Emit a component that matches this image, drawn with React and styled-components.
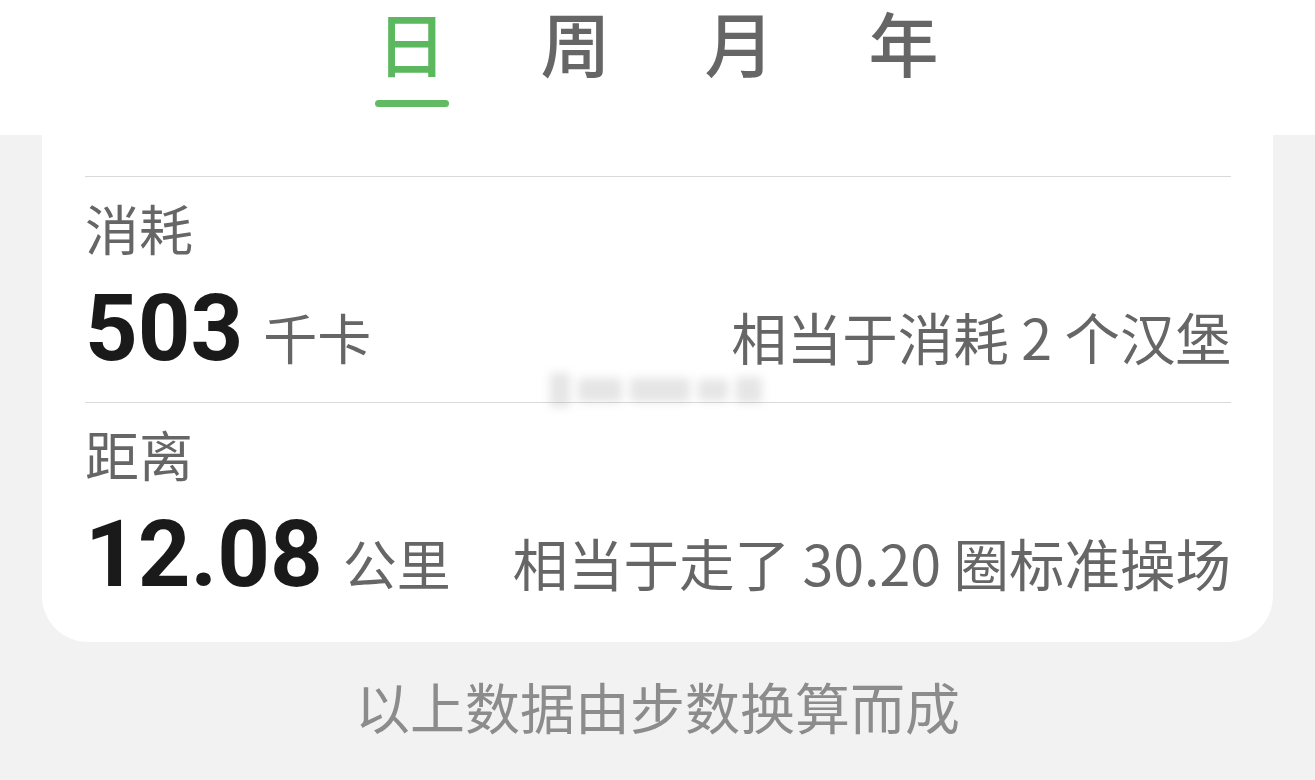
import React from 'react';
import styled, {createGlobalStyle} from "styled-components";

const GlobalStyle = createGlobalStyle`
  html, body {
    margin: 0;
    padding: 0;
    background: #f2f2f2;
  }
  body {
    font-family: "Noto Sans CJK SC", "Noto Sans", sans-serif;
  }
`;

const Page = styled.div`
  width: 1315px;
  height: 780px;
  overflow: hidden;
  background: #f2f2f2;
  display: flex;
  flex-direction: column;
`;

const Header = styled.div`
  height: 135px;
  background: #ffffff;
  display: flex;
  justify-content: center;
  gap: 90px;
`;

const Tab = styled.div`
  display: flex;
  flex-direction: column;
  align-items: center;
  padding-top: 2px;
`;

const TabText = styled.span`
  font-size: 70px;
  line-height: 80px;
  font-weight: 500;
  color: ${({active}) => active ? "#5cb85e" : "#666666"};
`;

const TabBar = styled.div`
  margin-top: 18px;
  width: 74px;
  height: 7px;
  border-radius: 4px;
  background: ${({active}) => active ? "#62bb62" : "transparent"};
`;

const Card = styled.div`
  position: relative;
  margin: 0 42px;
  padding: 41px 42px 14px 43px;
  background: #ffffff;
  border-radius: 0 0 46px 46px;
`;

const Section = styled.div`
  border-top: 1px solid #d9d9d9;
  padding-bottom: 27px;
`;

const Label = styled.div`
  margin-top: 24px;
  font-size: 54px;
  line-height: 1;
  color: #666666;
`;

const ValueRow = styled.div`
  margin-top: 28px;
  display: flex;
  align-items: baseline;
  justify-content: space-between;
`;

const Value = styled.span`
  font-family: Roboto, "Noto Sans", sans-serif;
  font-weight: 700;
  font-size: 92px;
  line-height: 1;
  color: #1a1a1a;
`;

const Unit = styled.span`
  margin-left: 20px;
  font-size: 54px;
  line-height: 1;
  color: #666666;
`;

const Hint = styled.span`
  font-size: 55.5px;
  line-height: 1;
  color: #666666;
`;

const Watermark = styled.div`
  position: absolute;
  left: 508px;
  top: 236px;
  width: 230px;
  height: 38px;
  filter: blur(5px);
  display: flex;
  gap: 8px;
  align-items: center;
  opacity: 0.25;
`;

const WatermarkBit = styled.span`
  height: ${({h}) => h}px;
  width: ${({w}) => w}px;
  background: #9a9a9a;
  border-radius: 3px;
`;

const Footer = styled.div`
  margin-top: 36px;
  text-align: center;
  font-size: 55px;
  line-height: 1;
  color: #8c8c8c;
`;

const tabs = ["日", "周", "月", "年"];

const stats = [
    {label: "消耗", value: "503", unit: "千卡", hint: "相当于消耗 2 个汉堡"},
    {label: "距离", value: "12.08", unit: "公里", hint: "相当于走了 30.20 圈标准操场"},
];

const App = () => {
    return (
        <Page>
            <GlobalStyle/>
            <Header>
                {tabs.map((t, i) => (
                    <Tab key={t}>
                        <TabText active={i === 0}>{t}</TabText>
                        <TabBar active={i === 0}/>
                    </Tab>
                ))}
            </Header>
            <Card>
                {stats.map((s) => (
                    <Section key={s.label}>
                        <Label>{s.label}</Label>
                        <ValueRow>
                            <span>
                                <Value>{s.value}</Value>
                                <Unit>{s.unit}</Unit>
                            </span>
                            <Hint>{s.hint}</Hint>
                        </ValueRow>
                    </Section>
                ))}
                <Watermark>
                    <WatermarkBit w={20} h={34}/>
                    <WatermarkBit w={44} h={24}/>
                    <WatermarkBit w={60} h={24}/>
                    <WatermarkBit w={30} h={22}/>
                    <WatermarkBit w={26} h={26}/>
                </Watermark>
            </Card>
            <Footer>以上数据由步数换算而成</Footer>
        </Page>
    );
};

export default App;
